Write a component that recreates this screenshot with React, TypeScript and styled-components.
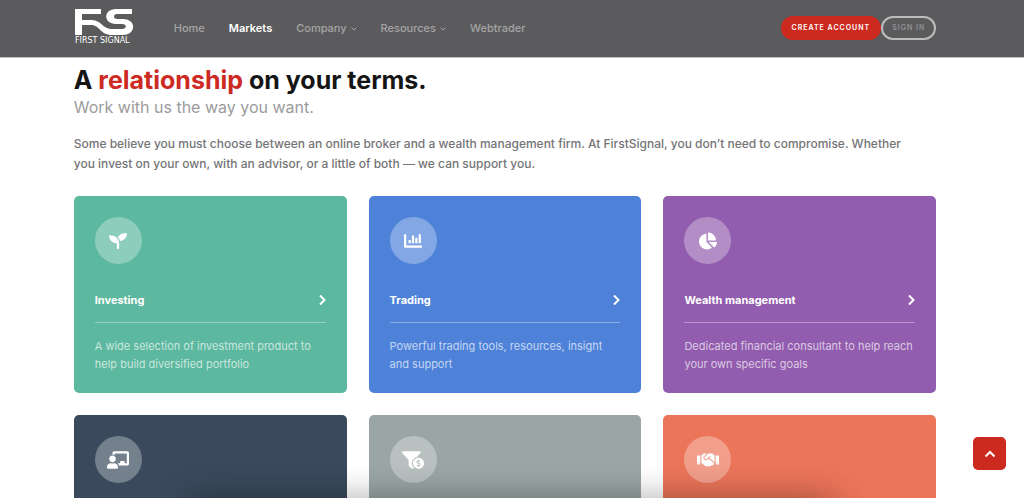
import React from "react";
import styled, { createGlobalStyle } from "styled-components";
import {
  FaSeedling,
  FaChartBar,
  FaChartPie,
  FaChalkboardTeacher,
  FaFunnelDollar,
  FaHandshake,
} from "react-icons/fa";
import type { IconType } from "react-icons";

const GlobalStyle = createGlobalStyle`
  *, *::before, *::after { box-sizing: border-box; }
  html { scrollbar-width: none; }
  body {
    margin: 0;
    background: #fff;
    color: #747476;
    font-family: Inter, "Liberation Sans", sans-serif;
    font-size: 12px;
    line-height: 20px;
  }
`;

const Header = styled.header`
  position: sticky;
  top: 0;
  z-index: 2;
  padding-right: 14px;
  background: #5b5b5d;
  border-bottom: 1px solid #c4c0c2;
`;

const Container = styled.div`
  width: 85.4%;
  max-width: 1140px;
  margin: 0 auto;
`;

const Bar = styled(Container)`
  display: flex;
  align-items: center;
  height: 57px;
  padding-bottom: 2px;
`;

const Logo = styled.a`
  display: flex;
  flex: none;
  width: 60px;
  margin-right: 40px;
  color: #fff;
`;

const Nav = styled.nav`
  display: flex;
  flex: 1;
  gap: 24px;
`;

const NavLink = styled.a<{ $active?: boolean }>`
  display: flex;
  align-items: center;
  gap: 4px;
  color: ${(p) => (p.$active ? "#fff" : "#a5a4a5")};
  font-size: 11px;
  font-weight: ${(p) => (p.$active ? 600 : 500)};
  line-height: 16px;
  text-decoration: none;
`;

const Caret = styled.svg`
  width: 6px;
  height: 4px;
  margin-top: 3px;
`;

const Actions = styled.div`
  display: flex;
  flex: none;
`;

const PillButton = styled.button<{ $outline?: boolean }>`
  height: 24px;
  padding: 0 9px;
  border: 2px solid ${(p) => (p.$outline ? "#bdbcbd" : "#cc2a1e")};
  border-radius: 12px;
  background: ${(p) => (p.$outline ? "transparent" : "#cc2a1e")};
  color: ${(p) => (p.$outline ? "#929193" : "#fff")};
  font: 600 7px/12px Inter, "Liberation Sans", sans-serif;
  letter-spacing: 1px;
  text-transform: uppercase;
`;

const Main = styled.main`
  padding: 6px 14px 22px 0;
`;

const Heading = styled.h1`
  margin: 0;
  color: #151516;
  font-size: 25px;
  font-weight: 700;
  line-height: 32px;

  em {
    color: #cc2a23;
    font-style: normal;
  }
`;

const Subheading = styled.p`
  margin: 0 0 16px;
  color: #9b9b9c;
  font-size: 16px;
  line-height: 22px;
`;

const Intro = styled.p`
  margin: 0 0 22px;
  font-weight: 500;
`;

const Grid = styled.div`
  display: grid;
  grid-template-columns: repeat(3, minmax(0, 1fr));
  gap: 22px;
`;

const Card = styled.article<{ $color: string }>`
  min-height: 197px;
  padding: 21px 21px 20px;
  border-radius: 5px;
  background: ${(p) => p.$color};
  color: #fff;
`;

const Badge = styled.div<{ $wide?: boolean }>`
  display: flex;
  align-items: center;
  justify-content: center;
  width: 47px;
  height: 47px;
  border-radius: 50%;
  background: rgba(255, 255, 255, 0.3);

  svg {
    flex: none;
    width: ${(p) => (p.$wide ? 22 : 18)}px;
    height: 18px;
  }
`;

const CardLink = styled.a`
  display: flex;
  align-items: center;
  justify-content: space-between;
  margin-top: 26px;
  padding-bottom: 12px;
  border-bottom: 1px solid rgba(255, 255, 255, 0.35);
  color: #fff;
  text-decoration: none;
`;

const CardTitle = styled.h2`
  margin: 0;
  font-size: 11px;
  font-weight: 700;
  line-height: 20px;
`;

const CardText = styled.p`
  margin: 14px 0 0;
  color: rgba(255, 255, 255, 0.68);
  font-size: 11px;
  line-height: 18px;
`;

const TopButton = styled.button`
  position: fixed;
  right: 18px;
  bottom: 28px;
  z-index: 3;
  display: flex;
  align-items: center;
  justify-content: center;
  width: 33px;
  height: 33px;
  padding: 0;
  border: 0;
  border-radius: 5px;
  background: #cc2a1e;
  color: #fff;
`;

const BottomShade = styled.div`
  position: fixed;
  right: 19%;
  bottom: -20px;
  left: 19%;
  height: 10px;
  border-radius: 10px;
  box-shadow: 0 0 34px 8px rgba(0, 0, 0, 0.4);
  pointer-events: none;
`;

type Item = { color: string; icon: IconType; wide?: boolean; title?: string; text?: string };

const items: Item[] = [
  {
    color: "#5cb89e",
    icon: FaSeedling,
    title: "Investing",
    text: "A wide selection of investment product to help build diversified portfolio",
  },
  {
    color: "#4e82d9",
    icon: FaChartBar,
    title: "Trading",
    text: "Powerful trading tools, resources, insight and support",
  },
  {
    color: "#925dae",
    icon: FaChartPie,
    title: "Wealth management",
    text: "Dedicated financial consultant to help reach your own specific goals",
  },
  { color: "#3a495c", icon: FaChalkboardTeacher, wide: true },
  { color: "#9aa5a5", icon: FaFunnelDollar, wide: true },
  { color: "#eb7459", icon: FaHandshake, wide: true },
];

const nav = [
  { label: "Home" },
  { label: "Markets", active: true },
  { label: "Company", menu: true },
  { label: "Resources", menu: true },
  { label: "Webtrader" },
];

export default function App() {
  return (
    <>
      <GlobalStyle />
      <Header>
        <Bar>
          <Logo href="#">
            <svg width="60" height="38" viewBox="0 0 60 38" fill="currentColor">
              <path d="M1 0H27V5H8V11H18C27 11 29 20 37 20H48C53 20 53 15 48 15H42C29 15 29 0 42 0H58V5H43C39 5 39 10 43 10H49C63 10 62 26 49 26H38C26 26 26 16 17 16H8V26H1Z" />
              <text x="1" y="34" fontFamily="DejaVu Sans, sans-serif" fontSize="8">
                FIRST SIGNAL
              </text>
            </svg>
          </Logo>
          <Nav>
            {nav.map((n) => (
              <NavLink key={n.label} href="#" $active={n.active}>
                {n.label}
                {n.menu && (
                  <Caret viewBox="0 0 6 4" fill="none" stroke="currentColor">
                    <path d="M0.6 0.6L3 3L5.4 0.6" />
                  </Caret>
                )}
              </NavLink>
            ))}
          </Nav>
          <Actions>
            <PillButton type="button">Create account</PillButton>
            <PillButton type="button" $outline>
              Sign in
            </PillButton>
          </Actions>
        </Bar>
      </Header>
      <Main>
        <Container>
          <Heading>
            A <em>relationship</em> on your terms.
          </Heading>
          <Subheading>Work with us the way you want.</Subheading>
          <Intro>
            Some believe you must choose between an online broker and a wealth management firm. At
            FirstSignal, you don’t need to compromise. Whether
            <br />
            you invest on your own, with an advisor, or a little of both — we can support you.
          </Intro>
          <Grid>
            {items.map(({ color, icon: Icon, wide, title, text }) => (
              <Card key={color} $color={color}>
                <Badge $wide={wide}>
                  <Icon />
                </Badge>
                {title && (
                  <CardLink href="#">
                    <CardTitle>{title}</CardTitle>
                    <svg width="8" height="12" viewBox="0 0 8 12" fill="none" stroke="currentColor" strokeWidth="2">
                      <path d="M2 1.5L6.5 6L2 10.5" />
                    </svg>
                  </CardLink>
                )}
                {text && <CardText>{text}</CardText>}
              </Card>
            ))}
          </Grid>
        </Container>
      </Main>
      <BottomShade />
      <TopButton type="button">
        <svg width="12" height="8" viewBox="0 0 12 8" fill="none" stroke="currentColor" strokeWidth="2">
          <path d="M1.5 6.5L6 2L10.5 6.5" />
        </svg>
      </TopButton>
    </>
  );
}
